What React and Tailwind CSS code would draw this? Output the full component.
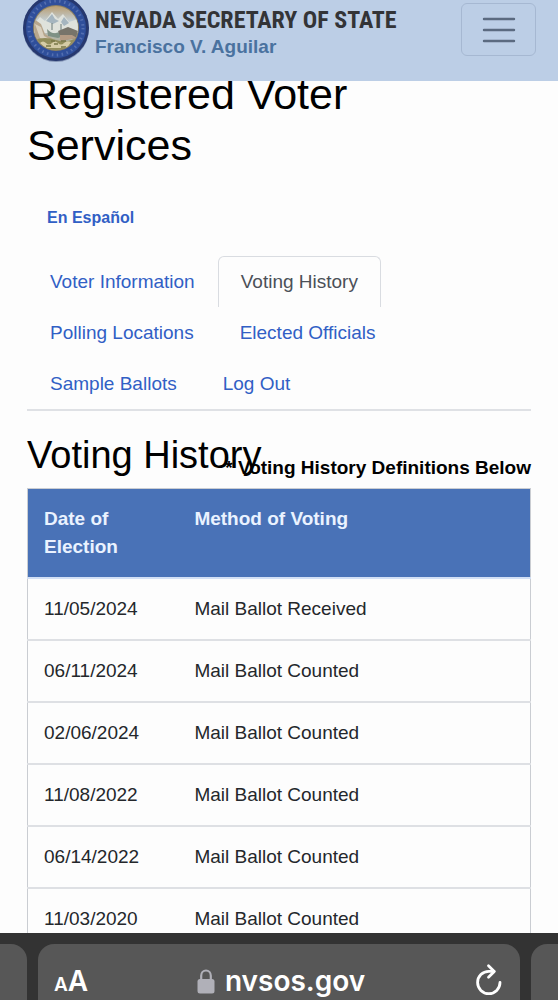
import React from "react";
import { clsx } from "clsx";

const tabs = [
  "Voter Information",
  "Voting History",
  "Polling Locations",
  "Elected Officials",
  "Sample Ballots",
  "Log Out",
];

const history = [
  { date: "11/05/2024", method: "Mail Ballot Received" },
  { date: "06/11/2024", method: "Mail Ballot Counted" },
  { date: "02/06/2024", method: "Mail Ballot Counted" },
  { date: "11/08/2022", method: "Mail Ballot Counted" },
  { date: "06/14/2022", method: "Mail Ballot Counted" },
  { date: "11/03/2020", method: "Mail Ballot Counted" },
];

// State seal, its top edge scrolled out of view
function Seal() {
  return (
    <svg width="68" height="64" viewBox="0 0 68 64" aria-hidden="true">
      <defs>
        <clipPath id="seal-scene">
          <circle cx="34" cy="28" r="22" />
        </clipPath>
        <linearGradient id="seal-sky" x1="0" y1="0" x2="0" y2="1">
          <stop offset="0" stopColor="#b99e72" />
          <stop offset="0.35" stopColor="#c3d0d8" />
          <stop offset="1" stopColor="#a7a184" />
        </linearGradient>
      </defs>
      <circle cx="34" cy="29" r="33" fill="#8495b5" />
      <circle cx="34" cy="28" r="33" fill="#26386f" />
      <circle cx="34" cy="28" r="30" fill="#2f4f9b" />
      <circle cx="34" cy="28" r="27" fill="none" stroke="#8ba0d2" strokeWidth="3" strokeDasharray="1.5 3.5" opacity="0.4" />
      <circle cx="34" cy="28" r="23" fill="#8c8162" />
      <g clipPath="url(#seal-scene)">
        <rect x="12" y="6" width="44" height="44" fill="url(#seal-sky)" />
        <path d="M12 24l6-7 5 4 7-9 6 7 5-5 6 8 9-3v14H12z" fill="#dfe2dc" />
        <path d="M24 21l6-7 3 5 4 2-6 3zM39 22l3-5 5 6-5 3z" fill="#a5b5bf" />
        <path d="M12 19l7 5 4 10 8 5-5 6-14-5z" fill="#b7a68c" />
        <path d="M13 24l6 3 3 9 7 4-3 2-8-4z" fill="#d8cfbd" />
        <path d="M25 29q7 8 16 1l3 5-8 3-10-2z" fill="#7f9185" />
        <path d="M36 31l10-4 10 4v7l-16 2z" fill="#77746a" />
        <path d="M38 35h12l5 3-17 3z" fill="#b39b84" />
        <path d="M12 40q11-4 22 0t22-3v13H12z" fill="#918d5b" />
        <path d="M18 43q3-3 6 0t6 0 6 0 6 0 7-1l-4 6H23z" fill="#d5cca6" />
        <path d="M24 46h5m3-2h4m3 3h5M29 41h4m6 0h5" stroke="#777647" strokeWidth="1.5" />
        <path d="M30 23v7m9-6v6" stroke="#6a7b78" strokeWidth="1" />
      </g>
    </svg>
  );
}

function SiteHeader() {
  return (
    <header className="relative z-10 flex h-[81px] shrink-0 items-start justify-between bg-[#bccee6] px-[22px]">
      <a href="#home" className="flex items-start gap-[5px]">
        <Seal />
        <span className="flex flex-col whitespace-nowrap pt-[5px] font-bold">
          <span className="font-['Roboto_Condensed','Liberation_Sans_Narrow',sans-serif] text-[24px] leading-[30px] text-[#333437]">
            NEVADA SECRETARY OF STATE
          </span>
          <span className="text-[19px] leading-6 text-[#4a729f]">Francisco V. Aguilar</span>
        </span>
      </a>
      <button
        type="button"
        aria-label="Toggle navigation"
        className="mt-[3px] flex h-[53px] w-[75px] items-center justify-center rounded-md border border-[#a6b8d2]"
      >
        <svg width="34" height="26" viewBox="0 0 34 26" fill="none" stroke="#5b6a80" strokeWidth="2.4" strokeLinecap="round">
          <path d="M2 2h30M2 13h30M2 24h30" />
        </svg>
      </button>
    </header>
  );
}

function Tabs({ active }) {
  return (
    <nav className="flex flex-wrap border-b-2 border-[#dfe1e5]">
      {tabs.map((tab) => (
        <a
          key={tab}
          href="#tab"
          aria-current={tab === active ? "page" : undefined}
          className={clsx(
            "rounded-t-md border-x border-t px-[22px] py-[11px] leading-7",
            tab === active
              ? "border-[#d9dce1] text-[#4b5058]"
              : "border-transparent text-[#315fc5]"
          )}
        >
          {tab}
        </a>
      ))}
    </nav>
  );
}

function HistoryTable({ rows }) {
  return (
    <table className="mt-[6px] w-full table-fixed border-collapse border border-[#cacdd2] text-left">
      <thead className="bg-[#4972b7] text-[#eaf2ff]">
        <tr className="border-b-2 border-[#d3e0f5] align-top">
          <th className="w-[30%] px-4 py-4 font-bold leading-7">Date of Election</th>
          <th className="px-4 py-4 font-bold leading-7">Method of Voting</th>
        </tr>
      </thead>
      <tbody className="text-[#24272b]">
        {rows.map((row) => (
          <tr key={row.date} className="border-b-2 border-[#dee0e4]">
            <td className="px-4 py-4 leading-7">{row.date}</td>
            <td className="px-4 py-4 leading-7">{row.method}</td>
          </tr>
        ))}
      </tbody>
    </table>
  );
}

function BrowserBar() {
  return (
    <footer className="relative z-10 flex h-[67px] shrink-0 gap-[11px] bg-[#333333] pt-[11px] text-white">
      <div className="w-[27px] rounded-tr-2xl bg-[#575757]" />
      <div className="flex flex-1 items-center justify-between rounded-t-2xl bg-[#575757] px-4 pt-[18px] font-['Inter',sans-serif]">
        <button type="button" aria-label="Page settings" className="flex items-baseline pt-1 font-semibold leading-9">
          <span className="text-[19px]">A</span>
          <span className="text-[28px]">A</span>
        </button>
        <div className="flex items-center gap-[10px]">
          <svg width="18" height="25" viewBox="0 0 18 25" aria-hidden="true">
            <path d="M4.2 11V6.8a4.8 5.3 0 0 1 9.6 0V11" fill="none" stroke="#b0b0b8" strokeWidth="2.2" />
            <rect x="0.5" y="10" width="17" height="14.5" rx="2.5" fill="#b0b0b8" />
          </svg>
          <span className="text-[28px] font-semibold leading-9">nvsos.gov</span>
        </div>
        <button type="button" aria-label="Reload">
          <svg width="30" height="36" viewBox="0 0 30 36" fill="none" stroke="white" strokeWidth="2.8" strokeLinecap="round" strokeLinejoin="round">
            <path d="M26 19.5A11.2 11.2 0 1 1 14.8 8.3H20" />
            <path d="M14.5 2.8L20.3 8.4L14.5 14.2" />
          </svg>
        </button>
      </div>
      <div className="w-[27px] rounded-tl-2xl bg-[#575757]" />
    </footer>
  );
}

export default function App() {
  return (
    <div className="flex h-screen flex-col overflow-hidden bg-[#fdfdfd] font-['Liberation_Sans',Arial,sans-serif] text-[19px]">
      <SiteHeader />
      <main className="-mt-3 min-h-0 flex-1 overflow-hidden px-[27px]">
        <h1 className="pr-12 text-[43px] leading-[51px] text-black">Registered Voter Services</h1>
        <a href="#es" className="mb-[26px] ml-5 mt-[35px] block w-fit text-base font-bold leading-6 text-[#315fc5]">
          En Español
        </a>
        <Tabs active="Voting History" />
        <h2 className="mt-[21px] text-[38px] leading-[46px] text-black">Voting History</h2>
        <p className="-mt-6 text-right font-bold leading-7 text-black">* Voting History Definitions Below</p>
        <HistoryTable rows={history} />
      </main>
      <BrowserBar />
    </div>
  );
}
